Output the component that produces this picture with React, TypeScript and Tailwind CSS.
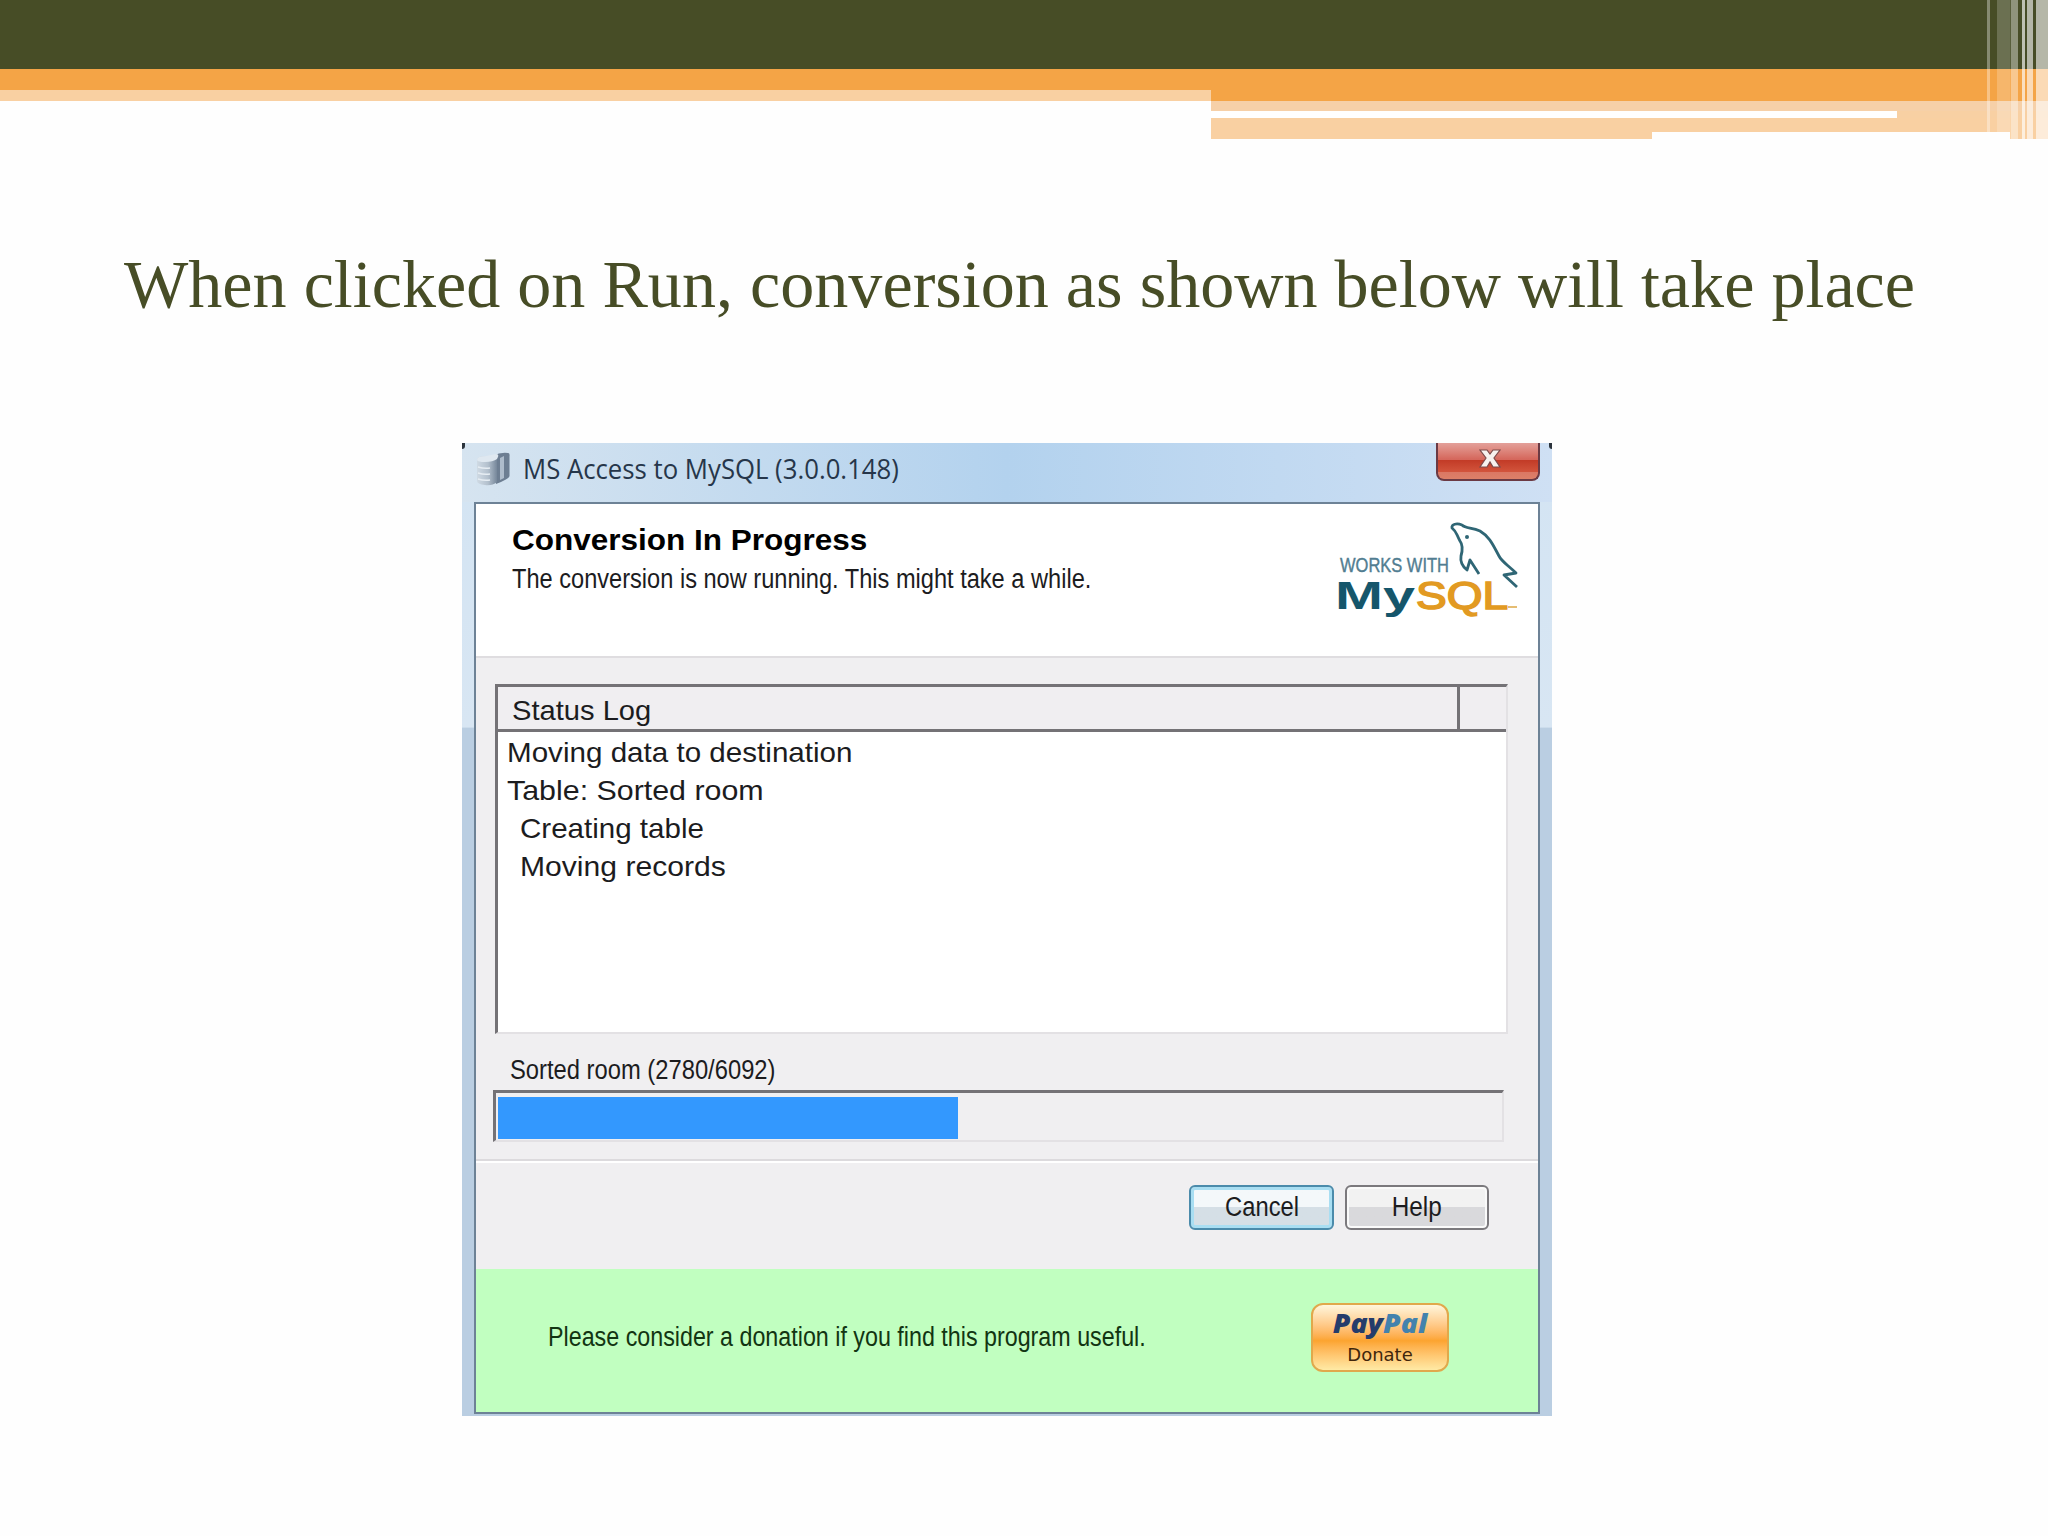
const stripes = [
  'w-[3px] bg-white/35',
  'w-[7px]',
  'w-[13px] bg-white/20',
  'w-[1px] bg-white/10',
  'w-[7px] bg-white/40',
  'w-[4px]',
  'w-[3px] bg-white/65',
  'w-[2px]',
  'w-[6px] bg-white/60',
  'w-[3px]',
  'flex-1 bg-white/60',
]

const log = [
  { text: 'Moving data to destination', cls: 'scale-x-[1.057]' },
  { text: 'Table: Sorted room', cls: 'scale-x-[1.085]' },
  { text: 'Creating table', cls: 'ml-[13px] scale-x-[1.055]' },
  { text: 'Moving records', cls: 'ml-[13px] scale-x-[1.075]' },
]

function Banner() {
  return (
    <header className="relative h-[139px] flex flex-col">
      <div className="h-[69px] bg-[#474d26]"></div>
      <div className="flex h-[70px]">
        <div className="w-[1211px]">
          <div className="h-[21px] bg-[#f4a446]"></div>
          <div className="h-[11px] bg-[#f9d0a2]"></div>
        </div>
        <div className="flex-1">
          <div className="h-8 bg-[#f4a446]"></div>
          <div className="h-[10px] bg-[#f6d0a8]"></div>
          <div className="h-[7px] flex">
            <div className="w-[686px] bg-white"></div>
            <div className="flex-1 bg-[#f8d0a3]"></div>
          </div>
          <div className="h-[14px] bg-[#f9d0a2]"></div>
          <div className="h-[7px] flex bg-[#f9d0a2]">
            <div className="w-[441px]"></div>
            <div className="w-[358px] bg-[#fefefe]"></div>
          </div>
        </div>
      </div>
      <div className="absolute top-0 right-0 h-[139px] w-[61px] flex">
        {stripes.map((s, i) => (
          <div key={i} className={s}></div>
        ))}
      </div>
    </header>
  )
}

function ServerIcon() {
  return (
    <svg className="w-[34px] h-[36px]" viewBox="0 0 34 36">
      <defs>
        <linearGradient id="front" x1="0" x2="1" y1="0" y2="0">
          <stop offset="0" stopColor="#cfdae4" />
          <stop offset="0.55" stopColor="#b3c0cd" />
          <stop offset="1" stopColor="#76879a" />
        </linearGradient>
      </defs>
      <path d="M17 5 Q24 1 32 2 Q34 2 33.500 5 V25 Q33 28 20 33 Z" fill="#6d7e92" />
      <path d="M24 7 L28 5 V27 L24 29 Z" fill="#aebccb" />
      <path d="M1 9 Q1 5 10 5 Q21 5 21 8 V31 Q16 35 9 34 Q1 33 1 30 Z" fill="url(#front)" />
      <path d="M1 9 Q1 5 10 5 L20 3 Q24 3 21 8 Q17 11 9 11 Q2 11 1 9 Z" fill="#dfe8f0" />
      <path d="M2 16 Q8 18 14 17 M2 22 Q8 24 14 23 M2 28 Q8 30 14 29" fill="none" stroke="#e6edf3" strokeWidth="1.5" />
    </svg>
  )
}

function MySqlLogo() {
  return (
    <svg className="w-[190px] h-[104px]" viewBox="1335 518 190 104" fontFamily="'Liberation Sans', sans-serif">
      <text x="1340" y="572" fontSize="20" fill="#517d91" stroke="#517d91" strokeWidth="0.4" textLength="109" lengthAdjust="spacingAndGlyphs">WORKS WITH</text>
      <text x="1335" y="609" fontSize="39" fontWeight="bold" fill="#15566b" textLength="80" lengthAdjust="spacingAndGlyphs">My</text>
      <text x="1416" y="609" fontSize="38" fill="#e29a22" stroke="#e29a22" strokeWidth="1.6" textLength="92" lengthAdjust="spacingAndGlyphs">SQL</text>
      <path d="M1508 607 h9" stroke="#e5bd73" strokeWidth="2" />
      <path
        d="M1479 574 L1470 560 L1467 570 C1462 566 1460 562 1461 556 C1463 549 1463 545 1460 541 C1456 534 1457 532 1452 528 C1451 524 1457 523 1462 525 C1466 529 1472 527 1480 531 C1490 537 1493 545 1499 556 C1502 562 1508 565 1516 573 L1504 575 L1517 587"
        fill="none"
        stroke="#2f6675"
        strokeWidth="2.8"
        strokeLinejoin="round"
      />
      <circle cx="1467" cy="537" r="2" fill="#2f6675" />
    </svg>
  )
}

function TitleBar() {
  return (
    <div className="relative h-[59px] flex items-start bg-linear-to-r from-[#d6e4f0] via-[#b3d2ee] to-[#cfe0f4]">
      <div className="pl-[14px] pt-[8px]">
        <ServerIcon />
      </div>
      <div className="ml-[13px] mt-[6px] h-10 leading-10 text-[27px] whitespace-nowrap origin-left scale-x-[0.953] font-['Open_Sans',sans-serif] text-[#26364a]">
        MS Access to MySQL (3.0.0.148)
      </div>
      <div className="absolute left-0 top-0 w-[3px] h-[6px] bg-[#2b333c] rounded-br-full"></div>
      <div className="absolute right-0 top-0 w-[3px] h-[6px] bg-[#2b333c] rounded-bl-full"></div>
      <button className="absolute right-[12px] top-0 w-[104px] h-[38px] rounded-b-lg border-2 border-t-0 border-[#6b3a44] bg-linear-to-b from-[#e3a09a] from-0% via-[#d5675c] via-45% to-[#dd8068] flex justify-center overflow-hidden">
        <span className="absolute inset-x-0 top-[17px] h-[12px] bg-linear-to-b from-[#c23a26] to-[#d2543c]"></span>
        <svg className="relative w-6 h-6 mt-1 ml-[3px]" viewBox="0 0 24 24">
          <path d="M2 3 H9 L12 7 L15 3 H22 L16 11 L22 20 H15 L12 15 L9 20 H2 L8 11 Z" fill="#f7f1ee" stroke="#7d4a4a" strokeWidth="1.2" />
        </svg>
      </button>
    </div>
  )
}

export default function App() {
  return (
    <div className="w-[2048px] h-[1536px] overflow-hidden bg-[#fefefe] font-['Liberation_Sans',sans-serif] text-[#1c1c1e]">
      <Banner />
      <h1 className="pl-[124px] mt-[105px] h-20 leading-20 text-[67px] whitespace-nowrap font-['Liberation_Serif',serif] text-[#474d26]">
        <span className="inline-block origin-left scale-x-[1.0165]">When clicked on Run, conversion as shown below will take place</span>
      </h1>

      <div className="ml-[462px] mt-[119px] w-[1090px] h-[973px] bg-linear-to-b from-[#d3e4f3] from-0% via-[#d8e6f3] via-[29.2%] to-[#bacee2] to-[29.3%]">
        <TitleBar />
        <div className="ml-[12px] w-[1066px] h-[912px] border-2 border-[#6d8296] bg-[#f0eff1] flex flex-col">
          <div className="h-[154px] shrink-0 bg-white border-b-2 border-[#dfdde0] flex justify-between">
            <div className="pl-[36px] pt-[16px] whitespace-nowrap">
              <div className="h-10 leading-10 text-[30px] font-bold text-black origin-left scale-x-[1.05]">Conversion In Progress</div>
              <div className="mt-px h-9 leading-9 text-[27px] origin-left scale-x-[0.874]">
                The conversion is now running. This might take a while.
              </div>
            </div>
            <div className="pt-[14px] pr-[13px]">
              <MySqlLogo />
            </div>
          </div>

          <div className="ml-[19px] mt-[26px] w-[1013px] h-[350px] shrink-0 border-t-[3px] border-l-[3px] border-t-[#747276] border-l-[#747276] border-b-2 border-r-2 border-b-[#e3e1e4] border-r-[#e3e1e4] bg-white">
            <div className="h-[45px] border-b-[3px] border-[#747276] bg-[#f0eef1] flex text-[28px]">
              <div className="w-[962px] border-r-[3px] border-[#747276] pl-[14px] leading-[48px]">
                <span className="inline-block origin-left scale-x-[1.04]">Status Log</span>
              </div>
            </div>
            <div className="pl-[9px] pt-[2px] text-[28px] leading-[38px]">
              {log.map((l) => (
                <div key={l.text} className={'w-max origin-left whitespace-nowrap ' + l.cls}>
                  {l.text}
                </div>
              ))}
            </div>
          </div>

          <div className="ml-[34px] mt-[18px] h-9 leading-9 text-[27px] origin-left scale-x-[0.88] whitespace-nowrap shrink-0 w-max">
            Sorted room (2780/6092)
          </div>
          <div className="ml-[17px] mt-[2px] w-[1011px] h-[52px] shrink-0 border-t-[3px] border-l-[3px] border-t-[#747276] border-l-[#747276] border-b-2 border-r-2 border-b-[#e3e1e4] border-r-[#e3e1e4] pt-1 pl-[2px]">
            <div className="w-[460px] h-[42px] bg-[#3398fe]"></div>
          </div>
          <div className="mt-[17px] h-[4px] shrink-0 border-t-2 border-[#dcdadd] bg-white"></div>

          <div className="h-[106px] shrink-0 flex justify-end gap-[11px] pt-[22px] pr-[49px] text-[27px]">
            <button className="w-[145px] h-[45px] rounded-md border-2 border-[#4b8bab] bg-linear-to-b from-[#f4f8fa] from-50% to-[#d5dfe6] to-50% shadow-[inset_0_0_0_3px_#a9def2]">
              <span className="inline-block scale-x-[0.88] translate-x-px">Cancel</span>
            </button>
            <button className="w-[144px] h-[45px] rounded-md border-2 border-[#7b797d] bg-linear-to-b from-[#f2f2f2] from-50% to-[#d9d9dc] to-50% shadow-[inset_0_0_0_2px_#fafafa]">
              <span className="inline-block scale-x-[0.9]">Help</span>
            </button>
          </div>

          <div className="flex-1 bg-[#c1ffc0] flex justify-between">
            <div className="pl-[72px] pt-[50px] whitespace-nowrap text-[#123512]">
              <div className="w-max leading-9 text-[27px] origin-left scale-x-[0.862]">
                Please consider a donation if you find this program useful.
              </div>
            </div>
            <button className="mt-[34px] mr-[89px] w-[138px] h-[69px] rounded-[12px] border-2 border-[#e0a94c] bg-linear-to-b from-[#fff6dc] via-[#fca42f] via-55% to-[#ffeaa5] flex flex-col items-center">
              <span className="h-9 leading-9 text-[27px] font-extrabold italic text-[#253c6b] scale-x-[1.05] font-['Open_Sans',sans-serif]">
                Pay<span className="text-[#4382ad]">Pal</span>
              </span>
              <span className="h-6 leading-[27px] text-[18px] text-[#40260c] font-['DejaVu_Sans',sans-serif]">Donate</span>
            </button>
          </div>
        </div>
      </div>
    </div>
  )
}
